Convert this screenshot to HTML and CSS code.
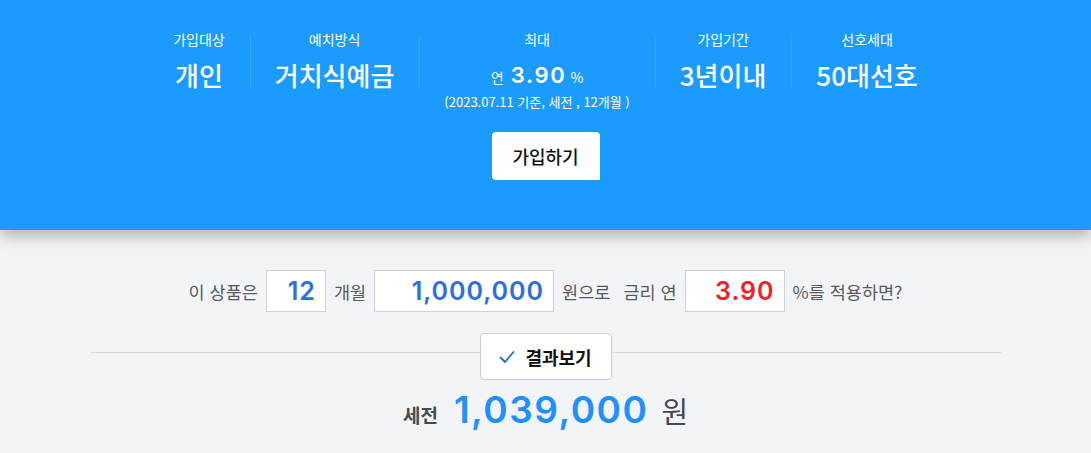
FILE: index.html
```html
<!DOCTYPE html>
<html lang="ko">
<head>
<meta charset="utf-8">
<link rel="stylesheet" href="styles.css">
</head>
<body>
<section class="hero">
  <ul class="specs">
    <li class="spec">
      <span class="spec-label">가입대상</span>
      <strong class="spec-value">개인</strong>
    </li>
    <li class="spec">
      <span class="spec-label">예치방식</span>
      <strong class="spec-value">거치식예금</strong>
    </li>
    <li class="spec">
      <span class="spec-label">최대</span>
      <span class="rate"><span class="rate-unit">연</span><strong class="rate-num">3.90</strong><span class="rate-unit">%</span></span>
      <span class="rate-note">(2023.07.11 기준, 세전 , 12개월 )</span>
    </li>
    <li class="spec">
      <span class="spec-label">가입기간</span>
      <strong class="spec-value">3년이내</strong>
    </li>
    <li class="spec">
      <span class="spec-label">선호세대</span>
      <strong class="spec-value">50대선호</strong>
    </li>
  </ul>
  <button class="join-btn" type="button">가입하기</button>
</section>
<section class="calc">
  <div class="calc-row">
    <span class="calc-text">이 상품은</span>
    <span class="field field-month">12</span>
    <span class="calc-text">개월</span>
    <span class="field field-amount">1,000,000</span>
    <span class="calc-text">원으로</span>
    <span class="calc-text gap-left">금리 연</span>
    <span class="field field-rate">3.90</span>
    <span class="calc-text">%를 적용하면?</span>
  </div>
  <div class="divider">
    <button class="result-btn" type="button">
      <svg class="check" width="16" height="14" viewBox="0 0 16 14" aria-hidden="true"><path d="M1.5 7.5 L6 12 L14.5 2" fill="none" stroke="#1f6fc0" stroke-width="1.8" stroke-linecap="round" stroke-linejoin="round"/></svg>
      <span>결과보기</span>
    </button>
  </div>
  <div class="result">
    <span class="result-label">세전</span>
    <strong class="result-num">1,039,000</strong>
    <span class="result-unit">원</span>
  </div>
</section>
</body>
</html>
```

FILE: styles.css
```css
* { box-sizing: border-box; }
html, body { margin: 0; padding: 0; }
body {
  background: #f3f4f8;
  font-family: "Noto Sans CJK KR", "Noto Sans", sans-serif;
  color: #555;
  overflow: hidden;
}
.hero {
  background: #1c9bff;
  height: 230px;
  padding-top: 28px;
  display: flex;
  flex-direction: column;
  align-items: center;
  box-shadow: 0 6px 14px rgba(0, 0, 0, 0.28);
  position: relative;
  z-index: 1;
}
.specs {
  list-style: none;
  margin: 0;
  padding: 0;
  display: flex;
  color: #fff;
}
.spec {
  display: flex;
  flex-direction: column;
  align-items: center;
  padding: 0 25px;
  position: relative;
}
.spec + .spec::before {
  content: "";
  position: absolute;
  left: 0;
  top: 7px;
  height: 53px;
  width: 1px;
  background: rgba(255, 255, 255, 0.12);
}
.spec-label {
  font-size: 14px;
  line-height: 22px;
}
.spec-value {
  font-size: 26px;
  font-weight: 500;
  line-height: 32px;
  margin-top: 9px;
}
.rate {
  display: flex;
  align-items: baseline;
  margin-top: 9px;
  line-height: 32px;
}
.rate-unit { font-size: 14px; }
.rate-num {
  font-family: Inter, "Noto Sans CJK KR", sans-serif;
  font-size: 22px;
  font-weight: 600;
  letter-spacing: 1.7px;
  margin: 0 4px 0 7px;
}
.rate-note {
  font-size: 13px;
  line-height: 16px;
  margin-top: 1px;
}
.join-btn {
  margin-top: 22px;
  width: 108px;
  height: 48px;
  border: 0;
  background: #fff;
  border-radius: 4px 4px 0 4px;
  font-family: inherit;
  font-size: 18px;
  font-weight: 500;
  color: #111;
  padding: 0;
}
.calc {
  padding-top: 40px;
  display: flex;
  flex-direction: column;
  align-items: center;
}
.calc-row {
  display: flex;
  align-items: center;
  height: 42px;
}
.calc-text {
  font-size: 17.5px;
  color: #555a62;
  margin: 0 8px;
}
.calc-text.gap-left { margin-left: 5px; }
.field {
  height: 42px;
  background: #fff;
  border: 1px solid #cfd0d4;
  display: flex;
  align-items: center;
  justify-content: flex-end;
  padding: 0 9px 0 0;
  font-family: Inter, "Noto Sans CJK KR", sans-serif;
  font-size: 25px;
  font-weight: 600;
  letter-spacing: 1px;
  color: #2b6fe0;
}
.field-month { width: 60px; }
.field-amount { width: 180px; }
.field-rate { width: 100px; color: #f0212b; }
.divider {
  width: 910px;
  margin-top: 21px;
  display: flex;
  justify-content: center;
  position: relative;
}
.divider::before {
  content: "";
  position: absolute;
  left: 0;
  right: 0;
  top: 19px;
  height: 1px;
  background: #d8d9dd;
}
.result-btn {
  position: relative;
  width: 132px;
  height: 47px;
  background: #fff;
  border: 1px solid #cbccd0;
  border-radius: 4px;
  display: flex;
  align-items: center;
  justify-content: center;
  gap: 10px;
  font-family: inherit;
  font-size: 18px;
  font-weight: 700;
  color: #111;
  padding: 0;
}
.result {
  display: flex;
  align-items: baseline;
  margin-top: 7px;
}
.result-label {
  font-size: 19px;
  font-weight: 700;
  color: #444a52;
}
.result-num {
  font-family: Inter, "Noto Sans CJK KR", sans-serif;
  font-size: 37px;
  font-weight: 600;
  letter-spacing: 1.5px;
  color: #1e90ff;
  margin: 0 13px 0 16px;
}
.result-unit {
  font-size: 29px;
  color: #444a52;
}
```
